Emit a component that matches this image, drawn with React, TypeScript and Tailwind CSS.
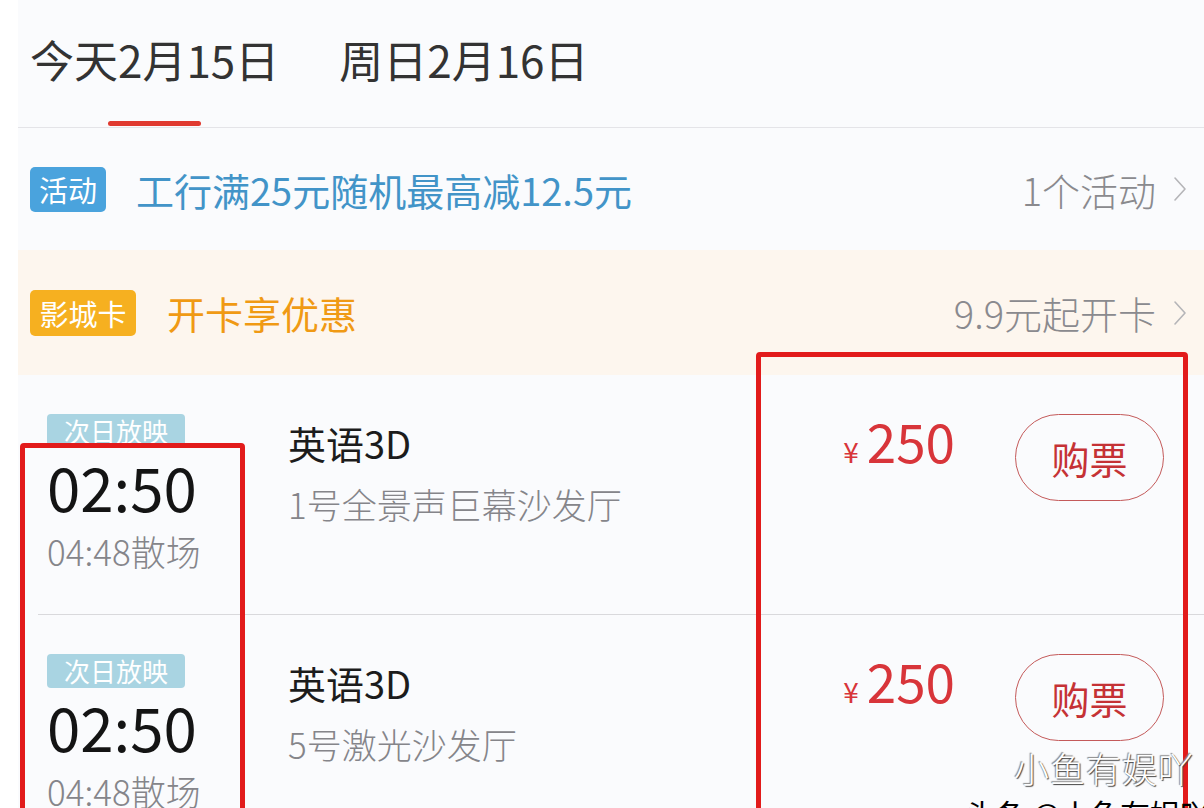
import React from "react";

const Chevron = () => (
  <svg width="14" height="28" viewBox="0 0 14 28" className="shrink-0">
    <polyline points="2,3 12,14 2,25" fill="none" stroke="#b5b5b8" strokeWidth="1.6" strokeLinecap="round" strokeLinejoin="round" />
  </svg>
);

const SessionRow = ({ hall, last }: { hall: string; last?: boolean }) => (
  <div className="relative flex items-start pt-[39px] pl-[29px] pr-[40px] h-[240px]">
    <div className="w-[241px] shrink-0 flex flex-col items-start">
      <div className="h-[34px] w-[138px] rounded-[4px] bg-[#a9d4e2] text-white text-[26px] leading-[34px] text-center">次日放映</div>
      <div className="mt-[8px] text-[60px] leading-[60px] text-[#141414]">02:50</div>
      <div className="mt-[17px] text-[35px] leading-[35px] text-[#85858a] font-light">04:48散场</div>
    </div>
    <div className="flex-1 flex flex-col">
      <div className="mt-[10px] text-[38px] leading-[38px] text-[#1c1c1c]">英语3D</div>
      <div className="mt-[24px] text-[35px] leading-[35px] text-[#85858a] font-light">{hall}</div>
    </div>
    <div className="flex items-baseline text-[#d8353a]">
      <span className="text-[28px] leading-[28px] mr-[8px]">¥</span>
      <span className="text-[53px] leading-[53px]">250</span>
    </div>
    <div className="ml-[60px] h-[87px] w-[149px] rounded-full border-[1.5px] border-[#c45a5a] flex items-center justify-center text-[38px] text-[#c53235]">购票</div>
    {!last && <div className="absolute left-[20px] right-0 bottom-0 h-px bg-[#d9d9dc]" />}
  </div>
);

export default function App() {
  return (
    <div className="relative w-[1204px] h-[808px] overflow-hidden bg-white font-['Noto_Sans_CJK_SC','Noto_Sans',sans-serif]">
      <div className="ml-[18px] h-full bg-[#fafbfd]">
        {/* tabs */}
        <div className="h-[128px] border-b border-[#e4e4e8] flex gap-[60px] pl-[12px] pt-[37px]">
          <div className="flex flex-col items-center">
            <span className="text-[44px] leading-[44px] text-[#333] whitespace-nowrap">今天2月15日</span>
            <div className="mt-[40px] h-[5px] w-[93px] rounded-full bg-[#e03a30]" />
          </div>
          <div className="flex flex-col items-center">
            <span className="text-[44px] leading-[44px] text-[#333] whitespace-nowrap">周日2月16日</span>
          </div>
        </div>
        {/* activity */}
        <div className="h-[122px] flex items-center pl-[12px] pr-[17px]">
          <div className="h-[45px] w-[76px] rounded-[5px] bg-[#4aa3dd] text-white text-[29px] leading-[45px] text-center">活动</div>
          <div className="ml-[30px] flex-1 text-[38px] text-[#4294c8] whitespace-nowrap">工行满25元随机最高减12.5元</div>
          <div className="text-[38px] text-[#8a8a8e] whitespace-nowrap font-light">1个活动</div>
          <div className="ml-[17px]"><Chevron /></div>
        </div>
        {/* card */}
        <div className="h-[125px] flex items-center pl-[12px] pr-[17px] bg-[#fdf6ee]">
          <div className="h-[46px] w-[106px] rounded-[5px] bg-[#f6b020] text-white text-[29px] leading-[46px] text-center">影城卡</div>
          <div className="ml-[31px] flex-1 text-[38px] text-[#f09a14] whitespace-nowrap">开卡享优惠</div>
          <div className="text-[38px] text-[#8a8a8e] whitespace-nowrap font-light">9.9元起开卡</div>
          <div className="ml-[17px]"><Chevron /></div>
        </div>
        {/* sessions */}
        <div>
          <SessionRow hall="1号全景声巨幕沙发厅" />
          <SessionRow hall="5号激光沙发厅" last />
        </div>
      </div>

      {/* annotation boxes */}
      <div className="absolute left-[20px] top-[443px] w-[225px] h-[420px] border-[5px] border-[#e21b1b] rounded-[4px]" />
      <div className="absolute left-[756px] top-[352px] w-[432px] h-[520px] border-[5px] border-[#e21b1b] rounded-[4px]" />

      {/* watermark */}
      <div className="absolute left-[1014px] top-[748px] text-[35px] leading-[40px] text-white font-light tracking-[1px] [text-shadow:_1px_1px_1px_#444,_-1px_-1px_1px_#888]">小鱼有娱吖</div>
      <div className="absolute left-[965px] top-[796px] text-[30px] leading-[34px] text-black whitespace-nowrap">头条 @小鱼有娱吖</div>
    </div>
  );
}
